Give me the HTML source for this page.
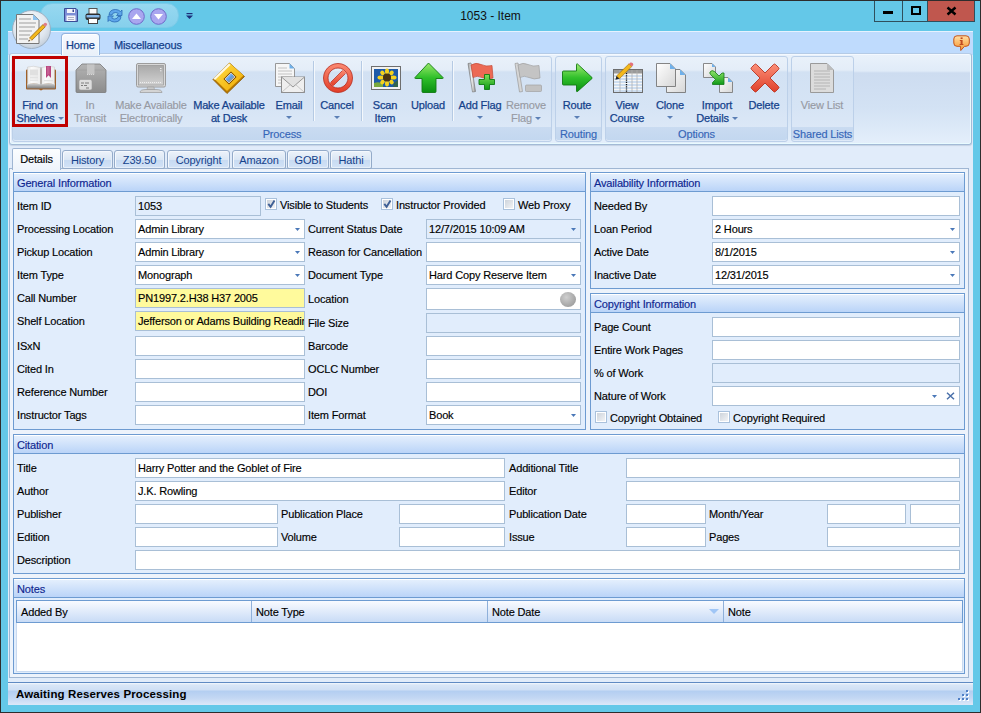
<!DOCTYPE html><html><head><meta charset="utf-8"><style>
*{margin:0;padding:0;box-sizing:content-box}
html,body{width:981px;height:713px;overflow:hidden;background:#64c8e8;font-family:"Liberation Sans", sans-serif;font-size:11px}
.abs{position:absolute}
.l{position:absolute;font-size:11px;line-height:13px;color:#000;white-space:nowrap;letter-spacing:-0.15px;-webkit-text-stroke:0.15px #000}
.bx{position:absolute;border:1px solid #a9bfd6;overflow:hidden}
.bt{position:absolute;left:2px;top:3px;-webkit-text-stroke:0.15px #000;line-height:13px;white-space:nowrap;color:#000;letter-spacing:-0.15px}
.arr{position:absolute;right:4px;top:8px;width:5px;height:3px;background:#4a78b8;clip-path:polygon(0 0,100% 0,50% 100%)}
.cb{position:absolute;width:10px;height:10px;border:1px solid #a9c1dc;background:#fff;box-shadow:inset 0 0 0 1px #fff;background:linear-gradient(135deg,#c9d0d8,#f6f7f9)}
.grp{position:absolute;border:1px solid #6d9bd1;background:#e1edfc}
.gh{position:relative;border-top:1px solid #fff;border-bottom:1px solid #6d9bd1;background:linear-gradient(#e4effd,#bad4f8);margin-top:0}
.gh span{position:absolute;left:3px;top:3px;line-height:13px;color:#0e2690;-webkit-text-stroke:0.15px #0e2690;letter-spacing:-0.15px;white-space:nowrap}
.rb{position:absolute;color:#15428b;-webkit-text-stroke:0.25px #15428b;text-align:center;line-height:13px;white-space:nowrap;letter-spacing:-0.15px}
.rb.dis{color:#979aa3;-webkit-text-stroke:0.15px #979aa3}
.rarr{display:inline-block;width:0;height:0;border-left:3px solid transparent;border-right:3px solid transparent;border-top:3px solid #5b7fb5;vertical-align:middle;margin-left:3px;margin-top:-2px}
.tab{position:absolute;border:1px solid #94abc9;box-shadow:inset 1px 1px 0 #f4f8fd,inset -1px -1px 0 #e6eff9;background:linear-gradient(#edf3fa,#dbe7f5 50%,#c8dbf2 55%,#d0e1f6 90%,#d8e7f8);color:#15428b;text-align:center;line-height:13px;letter-spacing:-0.15px;border-radius:3px 3px 2px 2px}
</style></head><body>
<div class="abs" style="left:0;top:0;width:981px;height:1px;background:#2d2d2d"></div>
<div class="abs" style="left:0;top:0;width:1px;height:713px;background:#2d2d2d"></div>
<div class="abs" style="left:980px;top:0;width:1px;height:713px;background:#2d2d2d"></div>
<div class="abs" style="left:0;top:712px;width:981px;height:1px;background:#2d2d2d"></div>
<div class="abs" style="left:0;top:9px;width:981px;text-align:center;font-size:12px;line-height:14px;color:#111">1053 - Item</div>
<div class="abs" style="left:874px;top:1px;width:27px;height:20px;border:1px solid #2f4f5c;border-top:none;background:#64c8e8"></div>
<div class="abs" style="left:883px;top:11px;width:10px;height:3px;background:#000"></div>
<div class="abs" style="left:903px;top:1px;width:24px;height:20px;border:1px solid #2f4f5c;border-top:none;border-left:none;background:#64c8e8"></div>
<div class="abs" style="left:911px;top:6px;width:6px;height:5px;border:2px solid #000"></div>
<div class="abs" style="left:928px;top:1px;width:46px;height:20px;border:1px solid #2f4f5c;border-top:none;border-left:none;background:#c0574e"></div>
<svg class="abs" style="left:946px;top:6px" width="11" height="10"><path d="M1.5 1.5 L9.5 8.5 M9.5 1.5 L1.5 8.5" stroke="#000" stroke-width="2.4"/></svg>
<div class="abs" style="left:40px;top:3px;width:137px;height:23px;border-radius:12px;background:linear-gradient(#97d8f0,#86d0ec);border:1px solid #7ccbe8"></div>
<div class="abs" style="left:8px;top:31px;width:965px;height:674px;background:#e1ecfa"></div>
<div class="abs" style="left:8px;top:31px;width:965px;height:23px;background:#bfdbfd;border-top:1px solid #e6f2fe"></div>
<div class="abs" style="left:9px;top:53px;width:961px;height:90px;border:1px solid #a3bad6;border-top-color:#b5cbe6;border-radius:3px;box-shadow:inset 0 -1px 0 #e8fbff,inset -1px 0 0 #e8fbff,inset 1px 1px 0 #f4f9ff,0 1px 1px #c5d3e4;background:linear-gradient(#eaf2fb 0,#e0ebf8 17px,#cddcf0 19px,#d3e2f4 60%,#e4effb 100%)"></div>
<div class="abs" style="left:61px;top:33px;width:37px;height:21px;border:1px solid #93b3de;border-bottom:none;border-radius:4px 4px 0 0;box-shadow:inset 1px 1px 0 #fff,inset -1px 0 0 #f0fbff;background:linear-gradient(#f7faff,#e9f0f9)"></div>
<div class="rb" style="left:66px;top:39px;color:#15428b;font-size:11px">Home</div>
<div class="rb" style="left:114px;top:39px;color:#15428b">Miscellaneous</div>
<div class="abs" style="left:12px;top:56px;width:538px;height:84px;border:1px solid #bcd0e9;border-radius:3px;background:linear-gradient(#e9f1fa 0,#e4edf8 13px,#d2e1f3 15px,#d6e4f5 60%,#dfeaf8 100%)"></div>
<div class="abs" style="left:13px;top:127px;width:538px;height:13px;background:linear-gradient(#c9dbf1,#c3d7ef);border-radius:0 0 2px 2px"></div>
<div class="rb" style="left:12px;top:128px;width:540px;color:#3566b8;-webkit-text-stroke:0.15px #3566b8">Process</div>
<div class="abs" style="left:555px;top:56px;width:45px;height:84px;border:1px solid #bcd0e9;border-radius:3px;background:linear-gradient(#e9f1fa 0,#e4edf8 13px,#d2e1f3 15px,#d6e4f5 60%,#dfeaf8 100%)"></div>
<div class="abs" style="left:556px;top:127px;width:45px;height:13px;background:linear-gradient(#c9dbf1,#c3d7ef);border-radius:0 0 2px 2px"></div>
<div class="rb" style="left:555px;top:128px;width:47px;color:#3566b8;-webkit-text-stroke:0.15px #3566b8">Routing</div>
<div class="abs" style="left:605px;top:56px;width:181px;height:84px;border:1px solid #bcd0e9;border-radius:3px;background:linear-gradient(#e9f1fa 0,#e4edf8 13px,#d2e1f3 15px,#d6e4f5 60%,#dfeaf8 100%)"></div>
<div class="abs" style="left:606px;top:127px;width:181px;height:13px;background:linear-gradient(#c9dbf1,#c3d7ef);border-radius:0 0 2px 2px"></div>
<div class="rb" style="left:605px;top:128px;width:183px;color:#3566b8;-webkit-text-stroke:0.15px #3566b8">Options</div>
<div class="abs" style="left:791px;top:56px;width:61px;height:84px;border:1px solid #bcd0e9;border-radius:3px;background:linear-gradient(#e9f1fa 0,#e4edf8 13px,#d2e1f3 15px,#d6e4f5 60%,#dfeaf8 100%)"></div>
<div class="abs" style="left:792px;top:127px;width:61px;height:13px;background:linear-gradient(#c9dbf1,#c3d7ef);border-radius:0 0 2px 2px"></div>
<div class="rb" style="left:791px;top:128px;width:63px;color:#3566b8;-webkit-text-stroke:0.15px #3566b8">Shared Lists</div>
<div class="abs" style="left:313px;top:61px;width:1px;height:60px;background:#b5cae4;border-right:1px solid #f4f8fc"></div>
<div class="abs" style="left:361px;top:61px;width:1px;height:60px;background:#b5cae4;border-right:1px solid #f4f8fc"></div>
<div class="abs" style="left:452px;top:61px;width:1px;height:60px;background:#b5cae4;border-right:1px solid #f4f8fc"></div>
<div class="rb" style="left:-20px;top:99px;width:120px">Find on</div>
<div class="rb" style="left:-20px;top:112px;width:120px">Shelves<i class="rarr"></i></div>
<div class="rb dis" style="left:30px;top:99px;width:120px">In</div>
<div class="rb dis" style="left:30px;top:112px;width:120px">Transit</div>
<div class="rb dis" style="left:91px;top:99px;width:120px">Make Available</div>
<div class="rb dis" style="left:91px;top:112px;width:120px">Electronically</div>
<div class="rb" style="left:169px;top:99px;width:120px">Make Available</div>
<div class="rb" style="left:169px;top:112px;width:120px">at Desk</div>
<div class="rb" style="left:229px;top:99px;width:120px">Email</div>
<div class="abs" style="left:286px;top:116px;width:0;height:0;border-left:3px solid transparent;border-right:3px solid transparent;border-top:3px solid #5b7fb5"></div>
<div class="rb" style="left:277px;top:99px;width:120px">Cancel</div>
<div class="abs" style="left:334px;top:116px;width:0;height:0;border-left:3px solid transparent;border-right:3px solid transparent;border-top:3px solid #5b7fb5"></div>
<div class="rb" style="left:325px;top:99px;width:120px">Scan</div>
<div class="rb" style="left:325px;top:112px;width:120px">Item</div>
<div class="rb" style="left:368px;top:99px;width:120px">Upload</div>
<div class="rb" style="left:420px;top:99px;width:120px">Add Flag</div>
<div class="abs" style="left:477px;top:116px;width:0;height:0;border-left:3px solid transparent;border-right:3px solid transparent;border-top:3px solid #5b7fb5"></div>
<div class="rb dis" style="left:466px;top:99px;width:120px">Remove</div>
<div class="rb dis" style="left:466px;top:112px;width:120px">Flag<i class="rarr"></i></div>
<div class="rb" style="left:517px;top:99px;width:120px">Route</div>
<div class="abs" style="left:574px;top:116px;width:0;height:0;border-left:3px solid transparent;border-right:3px solid transparent;border-top:3px solid #5b7fb5"></div>
<div class="rb" style="left:567px;top:99px;width:120px">View</div>
<div class="rb" style="left:567px;top:112px;width:120px">Course</div>
<div class="rb" style="left:610px;top:99px;width:120px">Clone</div>
<div class="abs" style="left:667px;top:116px;width:0;height:0;border-left:3px solid transparent;border-right:3px solid transparent;border-top:3px solid #5b7fb5"></div>
<div class="rb" style="left:657px;top:99px;width:120px">Import</div>
<div class="rb" style="left:657px;top:112px;width:120px">Details<i class="rarr"></i></div>
<div class="rb" style="left:704px;top:99px;width:120px">Delete</div>
<div class="rb dis" style="left:762px;top:99px;width:120px">View List</div>
<div class="abs" style="left:12px;top:56px;width:50px;height:65px;border:3px solid #c00000;background:transparent"></div>
<svg class="abs" style="left:22px;top:62px" width="38" height="32" viewBox="0 0 38 32">
<defs><linearGradient id="bpg" x1="0" y1="0" x2="0" y2="1"><stop offset="0" stop-color="#d0d0d0"/><stop offset="1" stop-color="#7d7d7d"/></linearGradient>
<linearGradient id="bpw" x1="0" y1="0" x2="1" y2="0"><stop offset="0" stop-color="#e9e9e9"/><stop offset="0.3" stop-color="#fbfbfb"/><stop offset="1" stop-color="#ececec"/></linearGradient></defs>
<path d="M4 8.5 Q4 7.5 5 7.5 L33 7.5 Q34 7.5 34 8.5 L34 26.5 Q34 27.5 33 27.5 L21 27.5 L19 28.5 L17 27.5 L5 27.5 Q4 27.5 4 26.5 Z" fill="#a0612a"/>
<rect x="5" y="21.5" width="28" height="5" fill="url(#bpg)"/>
<path d="M5.5 5 Q11.5 3.2 18.6 5.6 L18.6 22.6 Q11.5 20.5 5.5 22.6 Z" fill="url(#bpw)" stroke="#c4c4c4" stroke-width="0.5"/>
<path d="M19.4 5.6 Q26.5 3.2 32.5 5 L32.5 22.6 Q26.5 20.5 19.4 22.6 Z" fill="url(#bpw)" stroke="#c4c4c4" stroke-width="0.5"/>
<rect x="8" y="7.5" width="8" height="6" fill="#e0e0e0"/>
<rect x="8" y="14.5" width="8" height="2" fill="#e2e2e2"/>
<rect x="8" y="17.5" width="8" height="1.5" fill="#e6e6e6"/>
<rect x="22" y="18" width="9" height="1.2" fill="#e2e2e2"/>
<path d="M24 4 L29 4 L29 16 L26.5 13.2 L24 16 Z" fill="#b8457f"/>
<path d="M25 4.5 L27.5 4.5 L27.5 12 L25 13Z" fill="#d37aa6" opacity="0.5"/>
<rect x="18.4" y="5.4" width="1.2" height="17" fill="#a8a8a8"/>
</svg>
<svg class="abs" style="left:75px;top:63px" width="32" height="31" viewBox="0 0 32 31">
<defs><linearGradient id="gbx" x1="0" y1="0" x2="0" y2="1"><stop offset="0" stop-color="#b4b4b4"/><stop offset="1" stop-color="#8c8c8c"/></linearGradient></defs>
<path d="M1 7 L7 1 L25 1 L31 7 L31 28.5 Q31 29.5 30 29.5 L2 29.5 Q1 29.5 1 28.5 Z" fill="url(#gbx)" stroke="#7a7a7a" stroke-width="0.8"/>
<path d="M1.5 7 L30.5 7" stroke="#a0a0a0" stroke-width="0.8"/>
<rect x="12" y="1.4" width="7.5" height="10" fill="#c4c4c4"/>
<path d="M12 11.5 h7.5" stroke="#d8d8d8" stroke-dasharray="1 1"/>
<rect x="4" y="16.5" width="13" height="10.5" rx="1.8" fill="#dedede" stroke="#9a9a9a" stroke-width="0.6"/>
<path d="M6 20 H9 M10 20 H14 M6 22.5 H8 M9 22.5 H12 M11 25 H14" stroke="#666" stroke-width="0.8"/>
</svg>
<svg class="abs" style="left:135px;top:62px" width="32" height="32" viewBox="0 0 32 32">
<defs><linearGradient id="gsc" x1="0" y1="0" x2="0" y2="1"><stop offset="0" stop-color="#a9a9a9"/><stop offset="1" stop-color="#d2d2d2"/></linearGradient></defs>
<rect x="1.5" y="1.5" width="29" height="23.5" rx="1.5" fill="#d8d8d8" stroke="#9c9c9c"/>
<rect x="3.5" y="3.5" width="25" height="19.5" fill="url(#gsc)" stroke="#8e8e8e" stroke-width="0.6"/>
<path d="M25 6.5 h1.5 M25 8.8 h1.5" stroke="#eee" stroke-width="1"/>
<path d="M5 20.5 H27" stroke="#eee" stroke-width="1" stroke-dasharray="1 1"/>
<path d="M12.5 25 L12 28 L19.5 28 L19 25Z" fill="#c8c8c8" stroke="#9a9a9a" stroke-width="0.6"/>
<path d="M5 30.5 Q5 27.5 11 27.5 L21 27.5 Q27 27.5 27 30.5 Z" fill="#d4d4d4" stroke="#9a9a9a" stroke-width="0.7"/>
</svg>
<svg class="abs" style="left:208px;top:58px" width="40" height="40" viewBox="0 0 40 40">
<defs><linearGradient id="gdk" x1="0" y1="0" x2="1" y2="1"><stop offset="0" stop-color="#ffe04a"/><stop offset="1" stop-color="#f0a800"/></linearGradient>
<linearGradient id="gpic" x1="0" y1="0" x2="1" y2="1"><stop offset="0" stop-color="#cfe3fb"/><stop offset="0.5" stop-color="#5d9de6"/><stop offset="1" stop-color="#f39a1c"/></linearGradient></defs>
<path d="M21.5 5 L36.5 18.5 L19 35.5 L5 21.5 Z" fill="#b87800" stroke="#8a5800" stroke-width="0.8"/>
<path d="M21.5 5 L35.5 17.5 L19 33 L6 20.5 Z" fill="url(#gdk)"/>
<path d="M5.5 20.5 L21 5.5 L22.5 7 L7 22 Z" fill="#fff8e0"/>
<path d="M23 13.5 L28.5 19 L21 26.5 L15.5 21 Z" fill="#7a4a00"/>
<path d="M23 15 L27 19 L21 25 L17 21 Z" fill="url(#gpic)" stroke="#fff" stroke-width="0.6"/>
</svg>
<svg class="abs" style="left:274px;top:62px" width="32" height="32" viewBox="0 0 32 32">
<path d="M1.5 1.5 L15.5 1.5 L20.5 6.5 L20.5 24.5 L1.5 24.5 Z" fill="#f6f6f6" stroke="#8d8d8d" stroke-width="0.9"/>
<path d="M15.5 1.5 L15.5 6.5 L20.5 6.5 Z" fill="#6fb0ea"/>
<path d="M4 6 H13 M4 9 H18 M4 12 H18 M4 15 H18 M4 18 H8 M4 21 H8" stroke="#c2c2c2" stroke-width="1"/>
<rect x="7.5" y="15" width="23" height="15.5" fill="#efefef" stroke="#858585" stroke-width="0.9"/>
<path d="M7.5 15 L19 25 L30.5 15" fill="#e2e2e2" stroke="#8e8e8e" stroke-width="0.9"/>
<path d="M8 30 L16.5 22.5 M30 30 L21.5 22.5" stroke="#bdbdbd" stroke-width="0.8"/>
</svg>
<svg class="abs" style="left:322px;top:62px" width="32" height="32" viewBox="0 0 32 32">
<defs><linearGradient id="gcan" x1="0" y1="0" x2="0" y2="1"><stop offset="0" stop-color="#fb8a72"/><stop offset="1" stop-color="#e23d28"/></linearGradient></defs>
<path fill-rule="evenodd" d="M16 1.5 A14.5 14.5 0 1 0 16.01 1.5 Z M16 6 A10 10 0 1 1 15.99 6 Z" fill="url(#gcan)" stroke="#b52a1c" stroke-width="0.8"/>
<path d="M7.8 21.2 L21.2 7.8 L24.2 10.8 L10.8 24.2 Z" fill="url(#gcan)"/><path d="M8.6 20.4 L20.4 8.6 M11.6 23.4 L23.4 11.6" stroke="#b52a1c" stroke-width="0.7"/>
</svg>
<svg class="abs" style="left:371px;top:66px" width="30" height="24" viewBox="0 0 30 24">
<rect x="0.5" y="0.5" width="29" height="23" fill="#f2f2f2" stroke="#6e6e6e"/>
<rect x="3" y="3" width="24" height="18" fill="#1d5aa8"/>
<path d="M3 17 Q8 15 12 18 L12 21 L3 21Z" fill="#7aa83c"/>
<g fill="#f6d21c">
<ellipse cx="16" cy="5.5" rx="2" ry="3"/><ellipse cx="16" cy="17.5" rx="2" ry="3"/>
<ellipse cx="9.5" cy="11.5" rx="3" ry="2"/><ellipse cx="22.5" cy="11.5" rx="3" ry="2"/>
<ellipse cx="11.5" cy="7" rx="2.5" ry="2" transform="rotate(45 11.5 7)"/><ellipse cx="20.5" cy="16" rx="2.5" ry="2" transform="rotate(45 20.5 16)"/>
<ellipse cx="20.5" cy="7" rx="2.5" ry="2" transform="rotate(-45 20.5 7)"/><ellipse cx="11.5" cy="16" rx="2.5" ry="2" transform="rotate(-45 11.5 16)"/>
</g>
<circle cx="16" cy="11.5" r="4" fill="#4a3410"/>
<path d="M23 17 L27 14 L27 21 L22 21Z" fill="#3d6a2a" opacity="0.7"/>
</svg>
<svg class="abs" style="left:413px;top:61px" width="32" height="33" viewBox="0 0 32 33">
<defs><linearGradient id="gup" x1="0" y1="0" x2="0" y2="1"><stop offset="0" stop-color="#9be86a"/><stop offset="0.5" stop-color="#2fc02a"/><stop offset="1" stop-color="#0a8f10"/></linearGradient></defs>
<path d="M15.5 2 L30 16.5 Q30.5 17.5 29.5 17.5 L23 17.5 L23 30.5 Q23 31.5 22 31.5 L10 31.5 Q9 31.5 9 30.5 L9 17.5 L2.5 17.5 Q1.5 17.5 2 16.5 Z" fill="url(#gup)" stroke="#127a12" stroke-width="0.9" stroke-linejoin="round"/>
</svg>
<svg class="abs" style="left:466px;top:61px" width="32" height="32" viewBox="0 0 32 32">
<defs><linearGradient id="gpole" x1="0" y1="0" x2="1" y2="0"><stop offset="0" stop-color="#9a9a9a"/><stop offset="0.5" stop-color="#f4f4f4"/><stop offset="1" stop-color="#8a8a8a"/></linearGradient>
<linearGradient id="gplus" x1="0" y1="0" x2="0" y2="1"><stop offset="0" stop-color="#7fe05a"/><stop offset="1" stop-color="#0c9a12"/></linearGradient></defs>
<path d="M2 2.5 L5 2 L9.5 30.5 L6.5 31 Z" fill="url(#gpole)" stroke="#7d7d7d" stroke-width="0.7"/>
<path d="M5 4 Q10 1 15 3.5 Q20 6 26 4.5 L27 17 Q21 19 16 16.5 Q11 14 7 16.5 Z" fill="#ec6a55" stroke="#c44a36" stroke-width="0.7"/>
<path d="M13 18.5 H18.5 V13.5 H23.5 V18.5 H28.5 V23.5 H23.5 V28.5 H18.5 V23.5 H13 Z" fill="url(#gplus)" stroke="#0f7a12" stroke-width="0.9" stroke-linejoin="round"/>
</svg>
<svg class="abs" style="left:513px;top:61px" width="32" height="32" viewBox="0 0 32 32">
<path d="M2 2.5 L5 2 L9.5 30.5 L6.5 31 Z" fill="#d6d6d6" stroke="#9a9a9a" stroke-width="0.7"/>
<path d="M5 4 Q10 1 15 3.5 Q20 6 26 4.5 L27 17 Q21 19 16 16.5 Q11 14 7 16.5 Z" fill="#c4c4c4" stroke="#a0a0a0" stroke-width="0.7"/>
<rect x="12.5" y="24" width="16" height="6.5" rx="1" fill="#c2c2c2" stroke="#a2a2a2" stroke-width="0.7"/>
</svg>
<svg class="abs" style="left:561px;top:62px" width="33" height="31" viewBox="0 0 33 31">
<defs><linearGradient id="grt" x1="0" y1="0" x2="0" y2="1"><stop offset="0" stop-color="#a0ea70"/><stop offset="0.5" stop-color="#30c02b"/><stop offset="1" stop-color="#0a8f10"/></linearGradient></defs>
<path d="M2.5 9 L15.5 9 L15.5 2.5 Q15.5 1.5 16.5 2 L31 15.5 Q31.5 16 31 16.5 L16.5 29.5 Q15.5 30 15.5 29 L15.5 23 L2.5 23 Q1.5 23 1.5 22 L1.5 10 Q1.5 9 2.5 9 Z" fill="url(#grt)" stroke="#127a12" stroke-width="0.9" stroke-linejoin="round"/>
</svg>
<svg class="abs" style="left:612px;top:62px" width="32" height="32" viewBox="0 0 32 32">
<rect x="1.5" y="7.5" width="29" height="23" fill="#f7f7f7" stroke="#6d6d6d"/>
<rect x="2" y="8" width="28" height="3.5" fill="#9a9a9a"/>
<path d="M2 14 H30 M2 17 H30 M2 20 H30 M2 23 H30 M2 26 H30 M2 29 H30" stroke="#8fb7e6" stroke-width="0.8"/>
<path d="M8 8 V30 M20 8 V30 M25 8 V30" stroke="#b0b0b0" stroke-width="0.8"/>
<path d="M14.5 11 V30" stroke="#111" stroke-width="1.3" stroke-dasharray="1.2 1"/>
<path d="M4.5 14 L17 1.8 L19.8 4.6 L7.3 16.8 Z" fill="#f3b71b" stroke="#9b6a05" stroke-width="0.6"/>
<path d="M17 1.8 L18.5 0.6 Q19.5 0 20.5 1 L21 1.6 Q21.6 2.6 21 3.4 L19.8 4.6Z" fill="#e2707a"/>
<path d="M4.5 14 L3.4 17.8 L7.3 16.8Z" fill="#222"/>
</svg>
<svg class="abs" style="left:655px;top:62px" width="33" height="32" viewBox="0 0 33 32">
<defs><linearGradient id="gdoc" x1="0" y1="0" x2="1" y2="1"><stop offset="0" stop-color="#ffffff"/><stop offset="1" stop-color="#d6d6d6"/></linearGradient></defs>
<path d="M11.5 7.5 L25 7.5 L30.5 13 L30.5 30.5 L11.5 30.5 Z" fill="url(#gdoc)" stroke="#777" stroke-width="0.9"/>
<path d="M25 7.5 L25 13 L30.5 13Z" fill="#6fb0ea"/>
<path d="M1.5 1.5 L15 1.5 L20.5 7 L20.5 24.5 L1.5 24.5 Z" fill="url(#gdoc)" stroke="#777" stroke-width="0.9"/>
<path d="M15 1.5 L15 7 L20.5 7Z" fill="#6fb0ea"/>
</svg>
<svg class="abs" style="left:702px;top:62px" width="32" height="32" viewBox="0 0 32 32">
<defs><linearGradient id="gimp" x1="0" y1="0" x2="0" y2="1"><stop offset="0" stop-color="#8fe46a"/><stop offset="1" stop-color="#0f9a18"/></linearGradient></defs>
<path d="M1.5 1.5 L10 1.5 L13.5 5 L13.5 15.5 L1.5 15.5 Z" fill="url(#gdoc)" stroke="#7d7d7d" stroke-width="0.9"/>
<path d="M10 1.5 L10 5 L13.5 5Z" fill="#6fb0ea"/>
<path d="M17.5 15.5 L26 15.5 L30.5 20 L30.5 30.5 L17.5 30.5 Z" fill="url(#gdoc)" stroke="#7d7d7d" stroke-width="0.9"/>
<path d="M26 15.5 L26 20 L30.5 20Z" fill="#6fb0ea"/>
<path d="M8 10 Q10 7.5 12.5 9.5 L17 14 L20 11 L22 11 L22 22.5 L10.5 22.5 L10.5 20.5 L13.5 17.5 L8.5 12.5 Q7.5 11 8 10 Z" fill="url(#gimp)" stroke="#137a15" stroke-width="0.8" stroke-linejoin="round"/>
</svg>
<svg class="abs" style="left:749px;top:62px" width="32" height="32" viewBox="0 0 32 32">
<defs><linearGradient id="gdel" x1="0" y1="0" x2="0" y2="1"><stop offset="0" stop-color="#fb8f78"/><stop offset="1" stop-color="#e0402a"/></linearGradient></defs>
<path d="M2.5 5.5 L5.5 2.5 Q6.5 1.5 7.5 2.5 L16 11 L24.5 2.5 Q25.5 1.5 26.5 2.5 L29.5 5.5 Q30.5 6.5 29.5 7.5 L21 16 L29.5 24.5 Q30.5 25.5 29.5 26.5 L26.5 29.5 Q25.5 30.5 24.5 29.5 L16 21 L7.5 29.5 Q6.5 30.5 5.5 29.5 L2.5 26.5 Q1.5 25.5 2.5 24.5 L11 16 L2.5 7.5 Q1.5 6.5 2.5 5.5 Z" fill="url(#gdel)" stroke="#b8321f" stroke-width="0.9" stroke-linejoin="round"/>
</svg>
<svg class="abs" style="left:809px;top:62px" width="26" height="32" viewBox="0 0 26 32">
<path d="M1.5 1.5 L18 1.5 L24.5 8 L24.5 30.5 L1.5 30.5 Z" fill="#dcdcdc" stroke="#9a9a9a"/>
<path d="M18 1.5 L18 8 L24.5 8Z" fill="#bcbcbc"/>
<path d="M5 9 H21 M5 12 H21 M5 15 H21 M5 18 H21 M5 21 H21 M5 24 H21 M5 27 H17" stroke="#b4b4b4"/>
</svg>
<div class="abs" style="left:12px;top:10px;width:37px;height:37px;border-radius:50%;background:radial-gradient(circle at 45% 35%,#ffffff,#dfe6ee 55%,#aab9c9);border:1px solid #9fb0c2"></div>
<svg class="abs" style="left:16px;top:13px" width="32" height="32" viewBox="0 0 32 32">
<path d="M0.5 1.5 L17 1.5 L23 7 L23 30.5 L0.5 30.5 Z" fill="#f2f2f2" stroke="#777"/>
<path d="M17 1.5 L17 7 L23 7Z" fill="#8ec3ef"/>
<path d="M3 6 H15 M3 10 H20 M3 14 H19 M3 18 H16 M3 22 H14 M3 26 H12" stroke="#bbb" stroke-width="1.6"/>
<path d="M13.5 25 L27 11.5 L29.3 13.8 L15.8 27.3 Z" fill="#f3b71b" stroke="#8b5a05" stroke-width="0.7"/>
<path d="M27 11.5 L28.5 10 Q29.5 9.2 30.5 10.2 L30.8 10.5 Q31.6 11.5 30.8 12.3 L29.3 13.8Z" fill="#e07d86"/>
<path d="M13.5 25 L12.3 28.5 L15.8 27.3Z" fill="#f4d9b0"/>
<path d="M12.9 26.8 L12.3 28.5 L14 27.9Z" fill="#111"/>
</svg>
<svg class="abs" style="left:64px;top:8px" width="14" height="14" viewBox="0 0 14 14">
<path d="M0.5 0.5 L12 0.5 L13.5 2 L13.5 13.5 L0.5 13.5 Z" fill="#7d8ed6" stroke="#3b4c96"/>
<rect x="3" y="1" width="8" height="4" fill="#f4f4fa"/>
<rect x="8.5" y="1.5" width="1.5" height="2.5" fill="#3b4c96"/>
<rect x="2.5" y="7.5" width="9" height="5.5" fill="#f4f4fa"/>
<path d="M4 9.5 H10 M4 11.5 H10" stroke="#9aa0b8" stroke-width="0.8"/>
</svg>
<svg class="abs" style="left:85px;top:8px" width="16" height="16" viewBox="0 0 16 16">
<rect x="4" y="0.5" width="8" height="6" fill="#fafafa" stroke="#555"/>
<rect x="0.5" y="5.5" width="15" height="6.5" rx="2" fill="#2d2d2d"/>
<rect x="1.5" y="7" width="13" height="2.5" fill="#86b8ea"/>
<rect x="3.5" y="10.5" width="9" height="5" fill="#fff" stroke="#444"/>
</svg>
<svg class="abs" style="left:106px;top:7px" width="18" height="17" viewBox="0 0 18 17">
<path d="M3 8 Q3.5 2.5 9.5 2.5 Q12.5 2.5 14.5 4.5 L16 3 L16 8.5 L10.5 8.5 L12.3 6.7 Q11 5.5 9.5 5.5 Q6.3 5.5 6 8 Z" fill="#5ea6ea" stroke="#1f5fae" stroke-width="0.7" stroke-linejoin="round"/>
<path d="M15 9.5 Q14.5 15 8.5 15 Q5.5 15 3.5 13 L2 14.5 L2 9 L7.5 9 L5.7 10.8 Q7 12 8.5 12 Q11.7 12 12 9.5 Z" fill="#5ea6ea" stroke="#1f5fae" stroke-width="0.7" stroke-linejoin="round"/>
</svg>
<svg class="abs" style="left:128px;top:8px" width="17" height="17" viewBox="0 0 17 17">
<circle cx="8.5" cy="8.5" r="7.8" fill="#a9a6ef" stroke="#6f6ac9"/>
<path d="M4 11 L8.5 5.5 L13 11 Z" fill="#fff"/>
</svg>
<svg class="abs" style="left:150px;top:8px" width="17" height="17" viewBox="0 0 17 17">
<circle cx="8.5" cy="8.5" r="7.8" fill="#a9a6ef" stroke="#6f6ac9"/>
<path d="M4 6 L8.5 11.5 L13 6 Z" fill="#fff"/>
</svg>
<svg class="abs" style="left:186px;top:13px" width="7" height="6" viewBox="0 0 7 6"><rect x="0.5" y="0" width="6" height="1.2" fill="#1d2f7a"/><path d="M0 2.5 L7 2.5 L3.5 6Z" fill="#1d2f7a"/></svg>
<svg class="abs" style="left:953px;top:35px" width="18" height="17" viewBox="0 0 18 17">
<defs><linearGradient id="ginf" x1="0" y1="0" x2="0" y2="1"><stop offset="0" stop-color="#ffe0a8"/><stop offset="0.5" stop-color="#fbb865"/><stop offset="1" stop-color="#f59a3a"/></linearGradient></defs>
<path d="M4 0.8 H13 Q16.3 0.8 16.3 4 V8 Q16.3 11.3 13 11.3 H11.5 L7.8 15.5 L7.5 11.3 H4 Q0.8 11.3 0.8 8 V4 Q0.8 0.8 4 0.8 Z" fill="url(#ginf)" stroke="#c4541a" stroke-width="1"/>
<rect x="7.6" y="2.4" width="2" height="1.6" fill="#c04a20"/>
<path d="M6.8 5 H9.6 V9 H10.4 V10 H6.6 V9 H7.6 V6 H6.8 Z" fill="#c04a20"/>
</svg>
<div class="abs" style="left:9px;top:168px;width:958px;height:508px;border:1px solid #9fb6d3;background:#edf3fb"></div>
<div class="tab" style="left:62px;top:150px;width:49px;height:17px"><span style="position:absolute;left:0;right:0;top:3px">History</span></div>
<div class="tab" style="left:114px;top:150px;width:49px;height:17px"><span style="position:absolute;left:0;right:0;top:3px">Z39.50</span></div>
<div class="tab" style="left:167px;top:150px;width:61px;height:17px"><span style="position:absolute;left:0;right:0;top:3px">Copyright</span></div>
<div class="tab" style="left:232px;top:150px;width:52px;height:17px"><span style="position:absolute;left:0;right:0;top:3px">Amazon</span></div>
<div class="tab" style="left:287px;top:150px;width:40px;height:17px"><span style="position:absolute;left:0;right:0;top:3px">GOBI</span></div>
<div class="tab" style="left:330px;top:150px;width:40px;height:17px"><span style="position:absolute;left:0;right:0;top:3px">Hathi</span></div>
<div class="abs" style="left:12px;top:148px;width:47px;height:21px;border:1px solid #9fb6d3;border-bottom:none;border-radius:2px 2px 0 0;background:linear-gradient(#fbfdff,#eef4fb)"></div>
<div class="l" style="left:12px;top:153px;width:49px;text-align:center;color:#000">Details</div>
<div class="grp" style="left:13px;top:172px;width:571px;height:256px"><div class="gh" style="height:17px"><span>General Information</span></div></div>
<div class="grp" style="left:590px;top:172px;width:373px;height:115px"><div class="gh" style="height:17px"><span>Availability Information</span></div></div>
<div class="grp" style="left:590px;top:293px;width:373px;height:135px"><div class="gh" style="height:17px"><span>Copyright Information</span></div></div>
<div class="grp" style="left:13px;top:434px;width:950px;height:138px"><div class="gh" style="height:17px"><span>Citation</span></div></div>
<div class="grp" style="left:13px;top:578px;width:950px;height:94px"><div class="gh" style="height:17px"><span>Notes</span></div></div>
<div class="l" style="left:17px;top:200px;">Item ID</div>
<div class="l" style="left:17px;top:223px;">Processing Location</div>
<div class="l" style="left:17px;top:246px;">Pickup Location</div>
<div class="l" style="left:17px;top:269px;">Item Type</div>
<div class="l" style="left:17px;top:292px;">Call Number</div>
<div class="l" style="left:17px;top:315px;">Shelf Location</div>
<div class="l" style="left:17px;top:340px;">ISxN</div>
<div class="l" style="left:17px;top:363px;">Cited In</div>
<div class="l" style="left:17px;top:386px;">Reference Number</div>
<div class="l" style="left:17px;top:409px;">Instructor Tags</div>
<div class="bx" style="left:135px;top:196px;width:124px;height:18px;background:#e1edfc;"><span class="bt">1053</span></div>
<div class="bx" style="left:135px;top:219px;width:168px;height:18px;background:#fff;"><span class="bt">Admin Library</span><i class="arr"></i></div>
<div class="bx" style="left:135px;top:242px;width:168px;height:18px;background:#fff;"><span class="bt">Admin Library</span><i class="arr"></i></div>
<div class="bx" style="left:135px;top:265px;width:168px;height:18px;background:#fff;"><span class="bt">Monograph</span><i class="arr"></i></div>
<div class="bx" style="left:135px;top:288px;width:168px;height:18px;background:#fffa9c;"><span class="bt">PN1997.2.H38 H37 2005</span></div>
<div class="bx" style="left:135px;top:311px;width:168px;height:18px;background:#fffa9c;"><span class="bt">Jefferson or Adams Building Reading Rooms</span></div>
<div class="bx" style="left:135px;top:336px;width:168px;height:18px;background:#fff;"></div>
<div class="bx" style="left:135px;top:359px;width:168px;height:18px;background:#fff;"></div>
<div class="bx" style="left:135px;top:382px;width:168px;height:18px;background:#fff;"></div>
<div class="bx" style="left:135px;top:405px;width:168px;height:18px;background:#fff;"></div>
<div class="cb" style="left:265px;top:198px"><svg width="10" height="10" style="position:absolute;left:0;top:0"><path d="M2.3 4.9 L4.6 7.8 L8.5 1.6" stroke="#3f6096" stroke-width="1.9" fill="none"/></svg></div>
<div class="l" style="left:280px;top:199px;">Visible to Students</div>
<div class="cb" style="left:381px;top:198px"><svg width="10" height="10" style="position:absolute;left:0;top:0"><path d="M2.3 4.9 L4.6 7.8 L8.5 1.6" stroke="#3f6096" stroke-width="1.9" fill="none"/></svg></div>
<div class="l" style="left:396px;top:199px;">Instructor Provided</div>
<div class="cb" style="left:503px;top:198px"></div>
<div class="l" style="left:518px;top:199px;">Web Proxy</div>
<div class="l" style="left:308px;top:223px;">Current Status Date</div>
<div class="l" style="left:308px;top:246px;">Reason for Cancellation</div>
<div class="l" style="left:308px;top:269px;">Document Type</div>
<div class="l" style="left:308px;top:293px;">Location</div>
<div class="l" style="left:308px;top:317px;">File Size</div>
<div class="l" style="left:308px;top:340px;">Barcode</div>
<div class="l" style="left:308px;top:363px;">OCLC Number</div>
<div class="l" style="left:308px;top:386px;">DOI</div>
<div class="l" style="left:308px;top:409px;">Item Format</div>
<div class="bx" style="left:426px;top:219px;width:153px;height:18px;background:#e1edfc;"><span class="bt">12/7/2015 10:09 AM</span><i class="arr"></i></div>
<div class="bx" style="left:426px;top:242px;width:153px;height:18px;background:#fff;"></div>
<div class="bx" style="left:426px;top:265px;width:153px;height:18px;background:#fff;"><span class="bt">Hard Copy Reserve Item</span><i class="arr"></i></div>
<div class="bx" style="left:426px;top:288px;width:153px;height:20px;background:#fff;"></div>
<div class="bx" style="left:426px;top:313px;width:153px;height:18px;background:#e1edfc;"></div>
<div class="bx" style="left:426px;top:336px;width:153px;height:18px;background:#fff;"></div>
<div class="bx" style="left:426px;top:359px;width:153px;height:18px;background:#fff;"></div>
<div class="bx" style="left:426px;top:382px;width:153px;height:18px;background:#fff;"></div>
<div class="bx" style="left:426px;top:405px;width:153px;height:18px;background:#fff;"><span class="bt">Book</span><i class="arr"></i></div>
<div class="abs" style="left:560px;top:292px;width:16px;height:15px;border-radius:50%;background:radial-gradient(circle at 40% 35%,#cfcfcf,#a3a3a3 70%,#939393)"></div>
<div class="l" style="left:594px;top:200px;">Needed By</div>
<div class="l" style="left:594px;top:223px;">Loan Period</div>
<div class="l" style="left:594px;top:246px;">Active Date</div>
<div class="l" style="left:594px;top:269px;">Inactive Date</div>
<div class="bx" style="left:712px;top:196px;width:246px;height:18px;background:#fff;"></div>
<div class="bx" style="left:712px;top:219px;width:246px;height:18px;background:#fff;"><span class="bt">2 Hours</span><i class="arr"></i></div>
<div class="bx" style="left:712px;top:242px;width:246px;height:18px;background:#fff;"><span class="bt">8/1/2015</span><i class="arr"></i></div>
<div class="bx" style="left:712px;top:265px;width:246px;height:18px;background:#fff;"><span class="bt">12/31/2015</span><i class="arr"></i></div>
<div class="l" style="left:594px;top:321px;">Page Count</div>
<div class="l" style="left:594px;top:344px;">Entire Work Pages</div>
<div class="l" style="left:594px;top:367px;">% of Work</div>
<div class="l" style="left:594px;top:390px;">Nature of Work</div>
<div class="bx" style="left:712px;top:317px;width:246px;height:18px;background:#fff;"></div>
<div class="bx" style="left:712px;top:340px;width:246px;height:18px;background:#fff;"></div>
<div class="bx" style="left:712px;top:363px;width:246px;height:18px;background:#e1edfc;"></div>
<div class="bx" style="left:712px;top:386px;width:246px;height:18px;background:#fff;"></div>
<div class="abs" style="left:932px;top:395px;width:5px;height:3px;background:#4a78b8;clip-path:polygon(0 0,100% 0,50% 100%)"></div>
<svg class="abs" style="left:946px;top:392px" width="9" height="8" viewBox="0 0 9 8"><path d="M1 0.8 L8 7.2 M8 0.8 L1 7.2" stroke="#4a70aa" stroke-width="1.5"/></svg>
<div class="cb" style="left:595px;top:411px"></div>
<div class="l" style="left:610px;top:412px;">Copyright Obtained</div>
<div class="cb" style="left:718px;top:411px"></div>
<div class="l" style="left:733px;top:412px;">Copyright Required</div>
<div class="l" style="left:17px;top:462px;">Title</div>
<div class="l" style="left:17px;top:485px;">Author</div>
<div class="l" style="left:17px;top:508px;">Publisher</div>
<div class="l" style="left:17px;top:531px;">Edition</div>
<div class="l" style="left:17px;top:554px;">Description</div>
<div class="bx" style="left:135px;top:458px;width:368px;height:18px;background:#fff;"><span class="bt">Harry Potter and the Goblet of Fire</span></div>
<div class="bx" style="left:135px;top:481px;width:368px;height:18px;background:#fff;"><span class="bt">J.K. Rowling</span></div>
<div class="l" style="left:509px;top:462px;">Additional Title</div>
<div class="bx" style="left:626px;top:458px;width:332px;height:18px;background:#fff;"></div>
<div class="l" style="left:509px;top:485px;">Editor</div>
<div class="bx" style="left:626px;top:481px;width:332px;height:18px;background:#fff;"></div>
<div class="bx" style="left:135px;top:504px;width:141px;height:18px;background:#fff;"></div>
<div class="l" style="left:281px;top:508px;">Publication Place</div>
<div class="bx" style="left:399px;top:504px;width:104px;height:18px;background:#fff;"></div>
<div class="l" style="left:509px;top:508px;">Publication Date</div>
<div class="bx" style="left:626px;top:504px;width:78px;height:18px;background:#fff;"></div>
<div class="l" style="left:709px;top:508px;">Month/Year</div>
<div class="bx" style="left:827px;top:504px;width:77px;height:18px;background:#fff;"></div>
<div class="bx" style="left:910px;top:504px;width:48px;height:18px;background:#fff;"></div>
<div class="bx" style="left:135px;top:527px;width:141px;height:18px;background:#fff;"></div>
<div class="l" style="left:281px;top:531px;">Volume</div>
<div class="bx" style="left:399px;top:527px;width:104px;height:18px;background:#fff;"></div>
<div class="l" style="left:509px;top:531px;">Issue</div>
<div class="bx" style="left:626px;top:527px;width:78px;height:18px;background:#fff;"></div>
<div class="l" style="left:709px;top:531px;">Pages</div>
<div class="bx" style="left:827px;top:527px;width:131px;height:18px;background:#fff;"></div>
<div class="bx" style="left:135px;top:550px;width:823px;height:18px;background:#fff;"></div>
<div class="abs" style="left:16px;top:600px;width:945px;height:70px;border:1px solid #c9daf0;background:#fff"></div>
<div class="abs" style="left:16px;top:600px;width:945px;height:21px;border:1px solid #6d9bd1;background:linear-gradient(#f9fbff,#c8dbf6)"></div>
<div class="abs" style="left:251px;top:601px;width:1px;height:21px;background:#8fb0da"></div>
<div class="abs" style="left:487px;top:601px;width:1px;height:21px;background:#8fb0da"></div>
<div class="abs" style="left:723px;top:601px;width:1px;height:21px;background:#8fb0da"></div>
<div class="l" style="left:21px;top:606px;">Added By</div>
<div class="l" style="left:256px;top:606px;">Note Type</div>
<div class="l" style="left:492px;top:606px;">Note Date</div>
<div class="l" style="left:728px;top:606px;">Note</div>
<div class="abs" style="left:709px;top:609px;width:0;height:0;border-left:5px solid transparent;border-right:5px solid transparent;border-top:5px solid #a0c6f6"></div>
<div class="abs" style="left:8px;top:682px;width:965px;height:1px;background:#5f8ac3"></div>
<div class="abs" style="left:8px;top:683px;width:965px;height:22px;background:linear-gradient(#f4f8fd 0px,#d8e6f7 2px,#cfdff5 7px,#b3cef1 8px,#c3d7f3 15px,#dce8f8 22px)"></div>
<div class="abs" style="left:16px;top:687px;font-weight:bold;font-size:11.5px;letter-spacing:0.12px;line-height:14px;color:#000">Awaiting Reserves Processing</div>
<div class="abs" style="left:966px;top:690px;width:2px;height:2px;background:#4f7fc6;box-shadow:1px 1px 0 #fff"></div>
<div class="abs" style="left:962px;top:694px;width:2px;height:2px;background:#4f7fc6;box-shadow:1px 1px 0 #fff"></div>
<div class="abs" style="left:966px;top:694px;width:2px;height:2px;background:#4f7fc6;box-shadow:1px 1px 0 #fff"></div>
<div class="abs" style="left:958px;top:698px;width:2px;height:2px;background:#4f7fc6;box-shadow:1px 1px 0 #fff"></div>
<div class="abs" style="left:962px;top:698px;width:2px;height:2px;background:#4f7fc6;box-shadow:1px 1px 0 #fff"></div>
<div class="abs" style="left:966px;top:698px;width:2px;height:2px;background:#4f7fc6;box-shadow:1px 1px 0 #fff"></div>
</body></html>
